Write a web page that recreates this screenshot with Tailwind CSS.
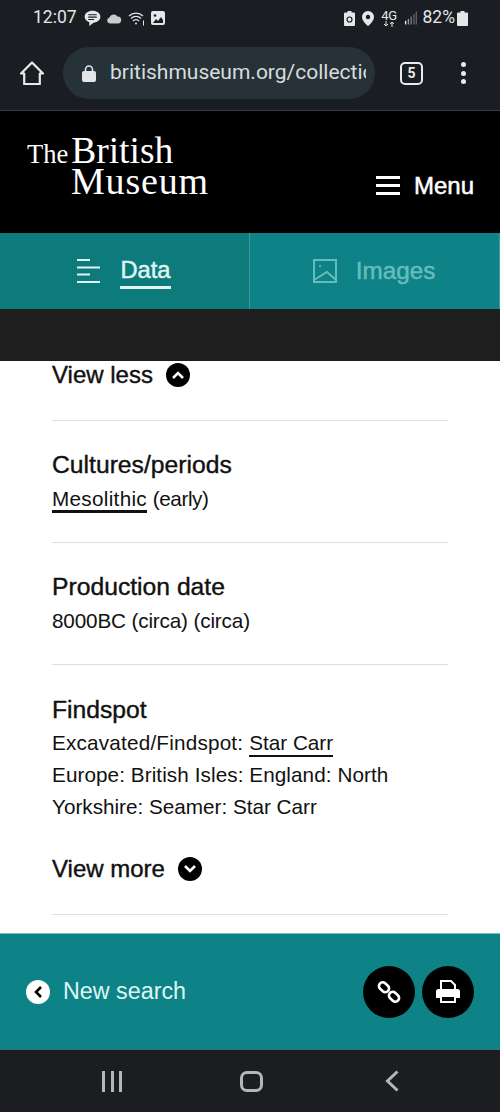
<!DOCTYPE html>
<html lang="en">
<head>
<meta charset="utf-8">
<script src="https://cdn.jsdelivr.net/npm/@tailwindcss/browser@4"></script>
</head>
<body class="w-[500px] h-[1112px] overflow-hidden bg-white font-['Liberation_Sans',sans-serif]">
<div class="flex flex-col h-[1112px]">
  <!-- status bar -->
  <div class="h-[36px] shrink-0 bg-[#1a1d21] flex items-center justify-between pl-[33px] pr-[32px] font-['Roboto',sans-serif] text-[#e4e6e7]">
    <div class="flex items-center">
      <span class="text-[17.500px] leading-none">12:07</span>
      <svg class="ml-[7px]" width="17" height="17" viewBox="0 0 16 16"><path d="M8 .8c4.200 0 7.400 2.400 7.400 5.600 0 3-2.800 5.300-6.400 5.600l-4 3v-3.400C2.300 10.600.6 8.700.6 6.400.6 3.200 3.800.8 8 .8z" fill="#e4e6e7"/><path d="M4 4.500h8M4 6.700h8M4 8.900h5.500" stroke="#1a1d21" stroke-width="1"/></svg>
      <svg class="ml-[5px]" width="16" height="11" viewBox="0 0 16 11"><path d="M4 10.500a3 3 0 0 1-.6-5.900A4.500 4.500 0 0 1 11.500 3.600 3.500 3.500 0 0 1 12.500 10.500z" fill="#c9cccd"/></svg>
      <svg class="ml-[6px]" width="17" height="15" viewBox="0 0 17 15" fill="none" stroke="#e4e6e7" stroke-width="1.200"><path d="M1 5a10 10 0 0 1 14 0M3 7.500a7 7 0 0 1 10 0M5 10a4 4 0 0 1 6 0"/><circle cx="8" cy="12.500" r="1" fill="#e4e6e7" stroke="none"/><path d="M15.500 9.500v5" stroke-width="1"/></svg>
      <svg class="ml-[6px]" width="14" height="14" viewBox="0 0 14 14"><rect width="14" height="14" rx="2" fill="#e4e6e7"/><path d="M2 12l3-4 2 2 3-4 2 3v3z" fill="#1a1d21"/><circle cx="4" cy="4.500" r="1.300" fill="#1a1d21"/></svg>
    </div>
    <div class="flex items-center">
      <svg width="11" height="15" viewBox="0 0 11 15"><path d="M3.500 0h4v1.500H10a1 1 0 0 1 1 1V14a1 1 0 0 1-1 1H1a1 1 0 0 1-1-1V2.500a1 1 0 0 1 1-1h2.500z" fill="#e4e6e7"/><circle cx="5.500" cy="8.500" r="2.500" fill="none" stroke="#1a1d21" stroke-width="1.200"/></svg>
      <svg class="ml-[7px]" width="12" height="15" viewBox="0 0 12 15"><path d="M6 0a6 6 0 0 1 6 6c0 3.500-3.500 7-6 9-2.500-2-6-5.500-6-9a6 6 0 0 1 6-6z" fill="#e4e6e7"/><circle cx="6" cy="6" r="2.200" fill="#1a1d21"/></svg>
      <div class="ml-[6px] w-[19px] h-[17px] flex flex-col items-center">
        <span class="text-[13px] leading-[11px] tracking-tight">4G</span>
        <svg width="14" height="6" viewBox="0 0 14 6" fill="none" stroke="#e4e6e7" stroke-width="1"><path d="M4 0v5M2 3l2 2 2-2M10 6V1M8 3l2-2 2 2"/></svg>
      </div>
      <svg class="ml-[5px]" width="13" height="14" viewBox="0 0 14 14"><path d="M1 10h1.500v4H1z" fill="#e4e6e7"/><path d="M4 8h1.500v6H4z" fill="#9a9c9d"/><path d="M7 5.500h1.500V14H7z" fill="#77797a"/><path d="M10 3h1.500v11H10zM12.500 0H14v14h-1.500z" fill="#5d5f60"/></svg>
      <span class="ml-[6px] text-[17.500px] leading-none">82%</span>
      <svg class="ml-[2px]" width="11" height="15" viewBox="0 0 11 15"><path d="M3.500 0h4v1.500H10a1 1 0 0 1 1 1V14a1 1 0 0 1-1 1H1a1 1 0 0 1-1-1V2.500a1 1 0 0 1 1-1h2.500z" fill="#e4e6e7"/></svg>
    </div>
  </div>
  <!-- browser toolbar -->
  <div class="h-[75px] shrink-0 bg-[#1a1d21] border-b border-[#3a3d40] flex items-center">
    <svg class="ml-[20px]" width="24" height="24" viewBox="0 0 24 24" fill="none" stroke="#e8eaeb" stroke-width="2.200" stroke-linejoin="round"><path d="M1 12.500L12 1.500l11 11h-3.200V23H4.200V12.500z"/></svg>
    <div class="ml-[19px] w-[312px] h-[52px] rounded-full bg-[#263238] flex items-center pl-[19px] overflow-hidden">
      <svg width="14" height="17" viewBox="0 0 14 17" class="shrink-0"><path d="M3.500 7V4.500a3.500 3.500 0 0 1 7 0V7" fill="none" stroke="#e4e6e7" stroke-width="1.600"/><rect y="6" width="14" height="11" rx="2" fill="#e4e6e7"/></svg>
      <div class="ml-[14px] w-[256px] overflow-hidden whitespace-nowrap font-['Roboto',sans-serif] text-[21px] text-[#d9dcde]">britishmuseum.org/collection</div>
    </div>
    <div class="ml-[25px] w-[23px] h-[23px] rounded-[5px] border-2 border-[#e8eaeb] flex items-center justify-center font-['Roboto',sans-serif] font-bold text-[14px] text-[#e8eaeb]">5</div>
    <div class="ml-[38px] flex flex-col gap-[3.500px]">
      <span class="w-[5px] h-[5px] rounded-full bg-[#e8eaeb]"></span>
      <span class="w-[5px] h-[5px] rounded-full bg-[#e8eaeb]"></span>
      <span class="w-[5px] h-[5px] rounded-full bg-[#e8eaeb]"></span>
    </div>
  </div>
  <!-- site header -->
  <div class="h-[122px] shrink-0 bg-black flex justify-between text-white">
    <div class="pl-[27px] pt-[22px] font-['Liberation_Serif',serif]">
      <div class="flex items-baseline h-[36px]">
        <span class="text-[26.500px] leading-[36px]">The</span>
        <span class="ml-[3px] text-[37.500px] leading-[36px]">British</span>
      </div>
      <div class="ml-[44px] -mt-[4px] text-[38px] leading-[32px] tracking-[0.8px]">Museum</div>
    </div>
    <div class="flex items-center gap-[14px] pr-[26px] pt-[26px]">
      <div class="flex flex-col gap-[5px]">
        <span class="block w-[24px] h-[3px] bg-white"></span>
        <span class="block w-[24px] h-[3px] bg-white"></span>
        <span class="block w-[24px] h-[3px] bg-white"></span>
      </div>
      <span class="text-[24px] leading-none pt-[2px] [-webkit-text-stroke:0.5px_white]">Menu</span>
    </div>
  </div>
  <!-- tabs -->
  <div class="h-[76px] shrink-0 flex">
    <div class="w-[249px] bg-[#0d7a7c] flex items-center justify-center text-[#def5f4] pr-[1px]">
      <svg width="24" height="24" viewBox="0 0 24 24" fill="none" stroke="#def5f4" stroke-width="2"><path d="M0 1h13M0 8.500h23M0 15.500h13M0 23h23"/></svg>
      <span class="ml-[19px] text-[23.700px] leading-[32px] [-webkit-text-stroke:0.5px_#def5f4] border-b-[3px] border-[#def5f4] h-[35px]">Data</span>
    </div>
    <div class="w-[1px] bg-[#3d9a9c]"></div>
    <div class="flex-1 bg-[#0e8387] flex items-center justify-center text-[#66bcbb] border-r border-[#3d9a9c] pr-[1px]">
      <svg width="24" height="24" viewBox="0 0 24 24" fill="none" stroke="#66bcbb" stroke-width="2"><rect x="1" y="1" width="22" height="22"/><circle cx="7" cy="7" r="1" fill="#66bcbb" stroke="none"/><path d="M1 21l13-8 9 8"/></svg>
      <span class="ml-[19px] text-[24.300px] [-webkit-text-stroke:0.5px_#66bcbb]">Images</span>
    </div>
  </div>
  <div class="h-[52px] shrink-0 bg-[#1e1e1e]"></div>
  <!-- content -->
  <div class="flex-1 bg-white px-[52px] text-[#111] overflow-hidden">
    <div class="h-[60px] border-b border-[#dedede] flex items-start">
      <span class="text-[24px] leading-[27px] [-webkit-text-stroke:0.4px_#111]">View less</span>
      <span class="ml-[13px] w-[24px] h-[24px] mt-[2px] rounded-full bg-black flex items-center justify-center">
        <svg width="12" height="8" viewBox="0 0 12 8" fill="none" stroke="white" stroke-width="2.600"><path d="M1 7l5-5 5 5"/></svg>
      </span>
    </div>
    <div class="h-[122px] border-b border-[#dedede] pt-[30px]">
      <div class="text-[24.700px] leading-[27px] [-webkit-text-stroke:0.4px_#111]">Cultures/periods</div>
      <div class="mt-[9px] text-[20.700px] leading-[23px]"><span class="border-b-[3px] border-[#111] tracking-[0.3px]">Mesolithic</span> <span class="tracking-[-0.4px]">(early)</span></div>
    </div>
    <div class="h-[122px] border-b border-[#dedede] pt-[30px]">
      <div class="text-[24.700px] leading-[27px] [-webkit-text-stroke:0.4px_#111]">Production date</div>
      <div class="mt-[9px] text-[20.700px] leading-[23px] tracking-[-0.15px]">8000BC (circa) (circa)</div>
    </div>
    <div class="h-[250px] border-b border-[#dedede] pt-[31px]">
      <div class="text-[24.700px] leading-[27px] [-webkit-text-stroke:0.4px_#111]">Findspot</div>
      <div class="mt-[4px] text-[20.700px] leading-[32px]"><span class="tracking-[0.2px]">Excavated/Findspot: </span><span class="border-b-2 border-[#111] pb-[1px]">Star Carr</span><br><span class="tracking-[0.08px]">Europe: British Isles: England: North</span><br>Yorkshire: Seamer: Star Carr</div>
      <div class="mt-[32px] flex items-center">
        <span class="text-[24px] leading-[27px] [-webkit-text-stroke:0.4px_#111]">View more</span>
        <span class="ml-[13px] w-[24px] h-[24px] rounded-full bg-black flex items-center justify-center">
          <svg width="12" height="8" viewBox="0 0 12 8" fill="none" stroke="white" stroke-width="2.600"><path d="M1 1l5 5 5-5"/></svg>
        </span>
      </div>
    </div>
  </div>
  <!-- footer -->
  <div class="h-[117px] shrink-0 bg-[#0e8387] border-t border-[#7fbcbd] border-b-[#3b6e70] border-b flex items-center pl-[26px] pr-[26px]">
    <span class="w-[24px] h-[24px] rounded-full bg-white flex items-center justify-center">
      <svg width="8" height="12" viewBox="0 0 8 12" fill="none" stroke="black" stroke-width="2.600"><path d="M7 1L2 6l5 5"/></svg>
    </span>
    <span class="ml-[13px] text-[23.300px] text-[#def5f4]">New search</span>
    <span class="ml-auto w-[52px] h-[52px] rounded-full bg-black flex items-center justify-center">
      <svg width="24" height="24" viewBox="0 0 24 24" fill="none" stroke="white" stroke-width="2.600"><rect x="1.500" y="3.500" width="11" height="7.500" rx="3.700" transform="rotate(42 7 7.250)"/><rect x="11.500" y="13" width="11" height="7.500" rx="3.700" transform="rotate(42 17 16.750)"/></svg>
    </span>
    <span class="ml-[7px] w-[52px] h-[52px] rounded-full bg-black flex items-center justify-center">
      <svg width="24" height="24" viewBox="0 0 24 24"><path d="M5 10V1h10l4 4v5z" fill="none" stroke="white" stroke-width="2"/><path d="M2.500 9h19A2.500 2.500 0 0 1 24 11.500V18h-4v-3H4v3H0v-6.500A2.500 2.500 0 0 1 2.500 9z" fill="white"/><rect x="5" y="16" width="14" height="6" fill="none" stroke="white" stroke-width="2"/></svg>
    </span>
  </div>
  <!-- nav bar -->
  <div class="h-[62px] shrink-0 bg-[#1b1d21] flex items-center">
    <div class="ml-[102px] flex gap-[5.500px]">
      <span class="w-[3px] h-[21px] bg-[#b5b6b8]"></span>
      <span class="w-[3px] h-[21px] bg-[#b5b6b8]"></span>
      <span class="w-[3px] h-[21px] bg-[#b5b6b8]"></span>
    </div>
    <span class="ml-[118px] w-[23px] h-[21px] rounded-[7px] border-[3px] border-[#b5b6b8]"></span>
    <svg class="ml-[122px]" width="14" height="22" viewBox="0 0 14 22" fill="none" stroke="#b5b6b8" stroke-width="3"><path d="M12.500 1.500L2.500 11l10 9.500"/></svg>
  </div>
</div>
</body>
</html>
